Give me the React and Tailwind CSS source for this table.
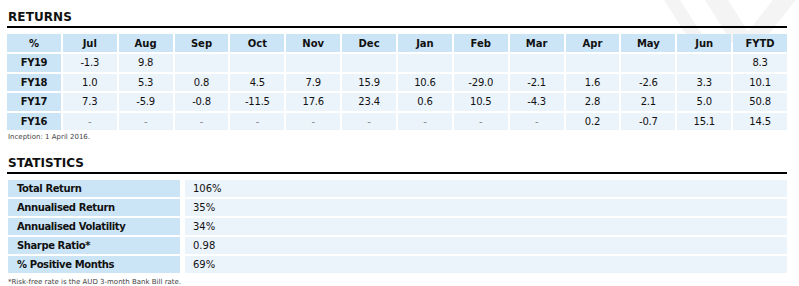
import React from "react";

const months = ["Jul","Aug","Sep","Oct","Nov","Dec","Jan","Feb","Mar","Apr","May","Jun","FYTD"];
const rows = [
  ["FY19", ["-1.3","9.8","","","","","","","","","","","8.3"]],
  ["FY18", ["1.0","5.3","0.8","4.5","7.9","15.9","10.6","-29.0","-2.1","1.6","-2.6","3.3","10.1"]],
  ["FY17", ["7.3","-5.9","-0.8","-11.5","17.6","23.4","0.6","10.5","-4.3","2.8","2.1","5.0","50.8"]],
  ["FY16", ["-","-","-","-","-","-","-","-","-","0.2","-0.7","15.1","14.5"]],
];
const stats = [
  ["Total Return","106%"],
  ["Annualised Return","35%"],
  ["Annualised Volatility","34%"],
  ["Sharpe Ratio*","0.98"],
  ["% Positive Months","69%"],
];

export default function App() {
  return (
    <div className="relative w-[799px] h-[286px] overflow-hidden bg-white text-[#111]" style={{ fontFamily: '"DejaVu Sans", sans-serif' }}>
      <svg className="absolute left-0 top-0" width="799" height="286" viewBox="0 0 799 286">
        <polygon points="664,0 680,0 708,44 692,44" fill="#f4f4f4" />
        <polygon points="705,0 728,0 756,44 733,44" fill="#f4f4f4" />
        <polygon points="773,0 796,0 761,44 738,44" fill="#f4f4f4" />
      </svg>
      <div className="relative pl-[7px] pr-[12px] pt-[10px]">
        <div className="pl-[1px] text-[12px] leading-[15px] font-bold tracking-[0.1px]">RETURNS</div>
        <div className="mt-[1px] h-[2px] bg-black"></div>
        <div className="mt-[6px] grid grid-cols-14 gap-[2px] w-[780px]">
          <div className="h-[18px] bg-[#cce5f6] flex items-center justify-center text-[10px] font-bold">%</div>
          {months.map((m) => (
            <div key={m} className="h-[18px] bg-[#cce5f6] flex items-center justify-center text-[10px] font-bold">{m}</div>
          ))}
          {rows.map(([fy, vals]) => (
            <React.Fragment key={fy}>
              <div className="h-[17.5px] bg-[#cce5f6] flex items-center justify-center text-[10px] font-bold tracking-[-0.4px]">{fy}</div>
              {vals.map((v, i) => (
                <div key={i} className={"h-[17.5px] bg-[#ebf3fb] flex items-center justify-center text-[10px] tracking-[-0.2px] " + (v === "-" ? "text-[#888]" : "text-[#111]")}>{v}</div>
              ))}
            </React.Fragment>
          ))}
        </div>
        <div className="mt-[3px] pl-[1px] text-[7px] leading-[9px] text-[#444]">Inception: 1 April 2016.</div>

        <div className="mt-[14px] pl-[1px] text-[12px] leading-[15px] font-bold">STATISTICS</div>
        <div className="mt-[1px] h-[2px] bg-black"></div>
        <div className="mt-[6px] ml-[1px] w-[779px] flex flex-col gap-[2px]">
          {stats.map(([k, v]) => (
            <div key={k} className="flex gap-[5px] h-[17px]">
              <div className="w-[172px] bg-[#cce5f6] flex items-center pl-[9px] text-[10px] font-bold tracking-[-0.4px]">{k}</div>
              <div className="flex-1 bg-[#ebf3fb] flex items-center pl-[8px] text-[10px]">{v}</div>
            </div>
          ))}
        </div>
        <div className="mt-[5px] pl-[1px] text-[7px] leading-[9px] text-[#444]">*Risk-free rate is the AUD 3-month Bank Bill rate.</div>
      </div>
    </div>
  );
}
